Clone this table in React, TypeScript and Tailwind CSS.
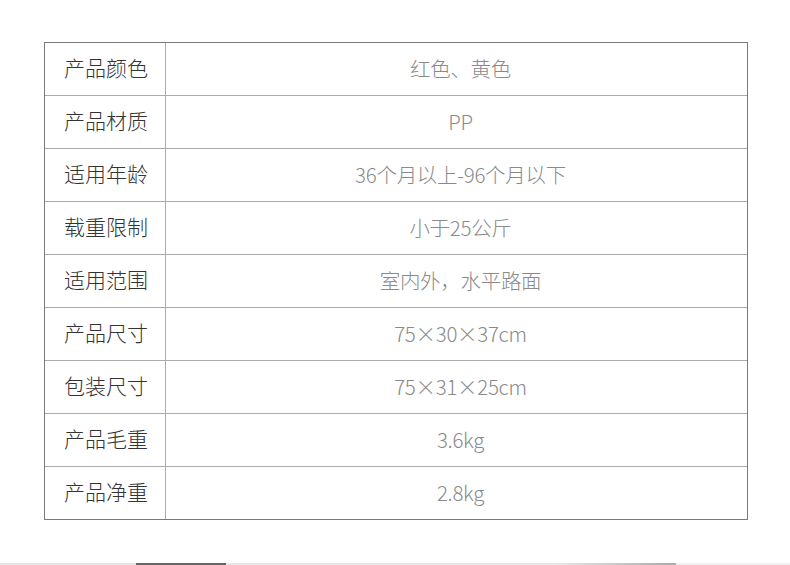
import React from "react";

const rows: [string, string][] = [
  ["产品颜色", "红色、黄色"],
  ["产品材质", "PP"],
  ["适用年龄", "36个月以上-96个月以下"],
  ["载重限制", "小于25公斤"],
  ["适用范围", "室内外，水平路面"],
  ["产品尺寸", "75×30×37cm"],
  ["包装尺寸", "75×31×25cm"],
  ["产品毛重", "3.6kg"],
  ["产品净重", "2.8kg"],
];

export default function App() {
  return (
    <div
      className="w-[790px] h-[565px] bg-white flex flex-col overflow-hidden"
      style={{ fontFamily: '"Noto Sans CJK SC", "Noto Sans", sans-serif' }}
    >
      <div className="flex-1 pt-[42px] pl-[44px]">
        <div className="w-[704px] border border-[#7a7a7a] flex flex-col">
          {rows.map(([k, v], i) => (
            <div
              key={k}
              className={`flex ${i > 0 ? "border-t border-[#ababab] h-[53px]" : "h-[52px]"}`}
            >
              <div className="w-[121px] border-r border-[#ababab] flex items-center justify-center text-[21px] font-light text-[#333] pl-[2px] pb-[2px]">
                {k}
              </div>
              <div className="flex-1 flex items-center justify-center text-[20.5px] font-light text-[#8a8a8a] pl-[8px] pb-[2px] tracking-[-0.3px]">
                {v}
              </div>
            </div>
          ))}
        </div>
      </div>
      <div className="h-[2px] flex bg-[#e6e6e6]">
        <div className="w-[136px] bg-[#e4e4e4]" />
        <div className="w-[90px] bg-[#666]" />
        <div className="w-[330px] bg-[#e8e8e8]" />
        <div className="w-[120px] bg-gradient-to-r from-[#e8e8e8] to-[#aaa]" />
        <div className="flex-1 bg-[#f0f0f0]" />
      </div>
    </div>
  );
}
